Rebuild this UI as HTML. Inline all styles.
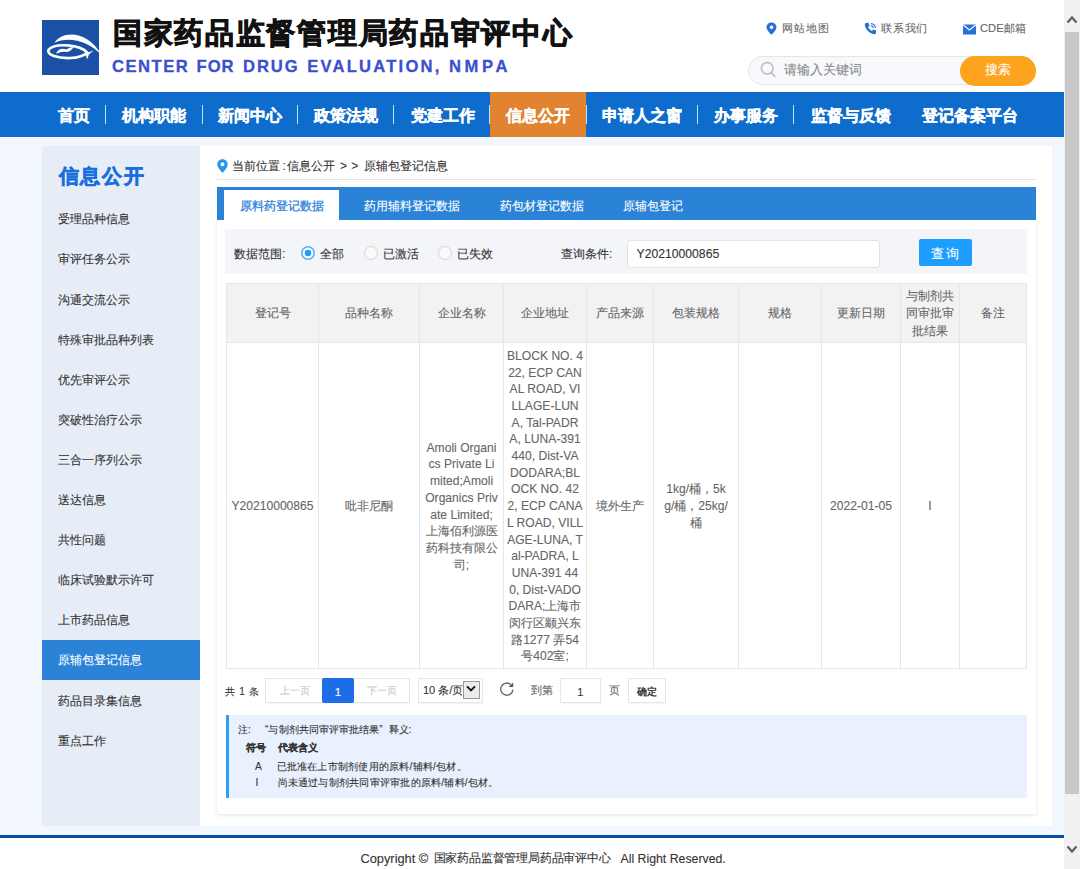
<!DOCTYPE html>
<html><head><meta charset="utf-8">
<style>
*{margin:0;padding:0;box-sizing:border-box}
html,body{width:1080px;height:869px;overflow:hidden;background:#fff;font-family:"Liberation Sans",sans-serif;color:#333;-webkit-text-stroke-width:0.1px}
.a{position:absolute;white-space:nowrap}
#nav{position:absolute;left:0;top:92px;width:1064px;height:45px;background:#0e6dcc}
#nav .t{position:absolute;top:1px;height:45px;line-height:45px;color:#fff;font-size:15.6px;font-weight:bold;-webkit-text-stroke:0.35px #fff;white-space:nowrap}
#nav .s{position:absolute;top:13px;width:1px;height:19px;background:rgba(255,255,255,.78)}
#bg{position:absolute;left:0;top:137px;width:1064px;height:698px;background:#f2f6fd}
#side{position:absolute;left:42px;top:146px;width:158px;height:680px;background:#e6edf6}
#side .i{position:absolute;left:0;width:158px;height:40.1px;line-height:40.1px;padding-left:16px;font-size:12px;color:#333;white-space:nowrap}

#side .act{background:#2b83d8;color:#fff}
#outer{position:absolute;left:200px;top:146px;width:852px;height:680px;background:#fff}
#card{position:absolute;left:217px;top:220px;width:819px;height:594px;background:#fff;box-shadow:0 1px 3px rgba(60,90,150,.18)}
#foot{position:absolute;left:0;top:835px;width:1064px;height:35px;background:#fff;border-top:3px solid #0a4ca6}
#sb{position:absolute;left:1064px;top:0;width:16px;height:869px;background:#f1f1f1}
#thumb{position:absolute;left:1065px;top:32px;width:14px;height:762px;background:#c8c8c8}
.tab{position:absolute;top:190px;height:33px;line-height:33px;font-size:12px;color:#fff;white-space:nowrap}
.rad{position:absolute;width:14px;height:14px;border:1px solid #d3d3d3;border-radius:50%;background:#f9f9f9}
.vl{position:absolute;top:283px;width:1px;height:386px;background:#e6e6e6}
.th{position:absolute;top:284px;height:60px;display:flex;align-items:center;justify-content:center;text-align:center;font-size:12px;color:#666;line-height:17.4px}
.td{position:absolute;top:343px;height:325px;padding-top:2px;display:flex;align-items:center;justify-content:center;text-align:center;font-size:12.1px;color:#666;line-height:16.7px;white-space:nowrap}
.z{font-size:11.7px}
.pb{position:absolute;top:678px;height:24.5px;border:1px solid #e6e6e6;box-shadow:0 0.5px 1px rgba(0,0,0,.04);background:#fff;font-size:11px;line-height:22.5px;text-align:center;white-space:nowrap}
.nt{position:absolute;font-size:10.5px;color:#333;white-space:nowrap}
</style></head><body>
<!-- header -->
<svg class="a" style="left:42px;top:19.6px;overflow:visible" width="64" height="56" viewBox="0 0 64 56">
 <rect width="57" height="55" fill="#1a50a6"/>
 <path d="M12.5 22.8 C19 11.5 45 8 60.5 36.5 C46 19.2 25 16.8 12.5 22.8 Z" fill="#fff"/>
 <path d="M45.5 32.8 C38 24.5 13 22.5 6.5 29.8 C4.5 35 16 38.5 28.5 38 C36 37.6 41.5 35.6 45.5 32.8 Z" fill="none" stroke="#fff" stroke-width="2.7"/>
 <path d="M43.5 33.5 L51.5 30.5 L47 34.5 L45 39.5 Z" fill="#fff"/>
 <path d="M14.5 32.4 C17 28.4 21 28.2 24.5 29.4 C26.5 28 28.5 27 31.5 26.9 C30.5 29.6 27.8 31.4 25 32.1 C21.5 31.2 18 31.6 14.5 33.8 Z" fill="#fff"/>
</svg>
<div class="a" id="title" style="left:113px;top:13.5px;font-size:29px;line-height:38px;font-weight:bold;color:#111;-webkit-text-stroke:0.9px #111;letter-spacing:1.7px">国家药品监督管理局药品审评中心</div>
<div class="a" style="left:112px;top:56px;font-size:16.6px;line-height:22px;font-weight:bold;color:#3b50cf;-webkit-text-stroke:0.3px #3b50cf;letter-spacing:1.5px">CENTER</div>
<div class="a" style="left:196.5px;top:56px;font-size:16.6px;line-height:22px;font-weight:bold;color:#3b50cf;-webkit-text-stroke:0.3px #3b50cf;letter-spacing:1.0px">FOR</div>
<div class="a" style="left:243px;top:56px;font-size:16.6px;line-height:22px;font-weight:bold;color:#3b50cf;-webkit-text-stroke:0.3px #3b50cf;letter-spacing:1.9px">DRUG</div>
<div class="a" style="left:307.3px;top:56px;font-size:16.6px;line-height:22px;font-weight:bold;color:#3b50cf;-webkit-text-stroke:0.3px #3b50cf;letter-spacing:2.2px">EVALUATION,</div>
<div class="a" style="left:449px;top:56px;font-size:16.6px;line-height:22px;font-weight:bold;color:#3b50cf;-webkit-text-stroke:0.3px #3b50cf;letter-spacing:3.6px">NMPA</div>

<svg class="a" style="left:766px;top:22px" width="11" height="13" viewBox="0 0 11 13"><path d="M5.5 0.5 C2.5 0.5 0.5 2.7 0.5 5.3 C0.5 8.3 5.5 12.8 5.5 12.8 C5.5 12.8 10.5 8.3 10.5 5.3 C10.5 2.7 8.5 0.5 5.5 0.5 Z M5.5 3.5 A1.8 1.8 0 1 1 5.5 7.1 A1.8 1.8 0 1 1 5.5 3.5 Z" fill="#2770d6" fill-rule="evenodd"/></svg>
<div class="a" style="left:782px;top:21px;font-size:11.2px;line-height:15px;color:#666;letter-spacing:0.9px">网站地图</div>
<svg class="a" style="left:864px;top:22px" width="13" height="13" viewBox="0 0 13 13"><path d="M2 1 L4.5 0.8 L5.6 3.8 L4 5 C4.8 6.8 6.2 8.2 8 9 L9.2 7.4 L12.2 8.5 L12 11 C11.8 12 11 12.3 10 12.2 C5.5 11.5 1.5 7.5 0.8 3 C0.7 2 1 1.2 2 1 Z" fill="#2770d6"/><path d="M7 1.5 C9.3 1.8 11.2 3.7 11.5 6" stroke="#2770d6" stroke-width="1.1" fill="none"/><path d="M7 3.6 C8.2 3.8 9.2 4.8 9.4 6" stroke="#2770d6" stroke-width="1.1" fill="none"/></svg>
<div class="a" style="left:881px;top:21px;font-size:11.2px;line-height:15px;color:#666;letter-spacing:0.8px">联系我们</div>
<svg class="a" style="left:963px;top:24px" width="13" height="11" viewBox="0 0 13 11"><path d="M0 0.5 H13 V10.5 H0 Z" fill="#2770d6"/><path d="M0.3 1 L6.5 6 L12.7 1" stroke="#fff" stroke-width="1.2" fill="none"/></svg>
<div class="a" style="left:980px;top:21px;font-size:11.2px;line-height:15px;color:#666">CDE邮箱</div>

<div class="a" style="left:748px;top:56px;width:288px;height:29px;border:1px solid #e4e6ea;border-radius:15px;background:#f7f9fc"></div>
<svg class="a" style="left:759px;top:60px" width="20" height="20" viewBox="0 0 20 20"><circle cx="8.2" cy="8.3" r="5.8" stroke="#c4c4c4" stroke-width="1.8" fill="none"/><path d="M12.6 12.8 L16.2 16.8" stroke="#c4c4c4" stroke-width="1.9"/></svg>
<div class="a" style="left:784px;top:62px;font-size:12.5px;line-height:17px;color:#888">请输入关键词</div>
<div class="a" style="left:960px;top:56px;width:76px;height:29.5px;border-radius:15px;background:#fda31d;color:#fff;font-size:12.5px;line-height:29.5px;text-align:center">搜索</div>

<!-- nav -->
<div id="nav">
 <div class="t" style="left:58px">首页</div>
 <div class="s" style="left:105px"></div>
 <div class="t" style="left:122px">机构职能</div>
 <div class="s" style="left:202px"></div>
 <div class="t" style="left:218px">新闻中心</div>
 <div class="s" style="left:297px"></div>
 <div class="t" style="left:314px">政策法规</div>
 <div class="s" style="left:393px"></div>
 <div class="t" style="left:410.5px">党建工作</div>
 <div class="s" style="left:489px"></div>
 <div style="position:absolute;left:490px;top:0;width:96px;height:45px;background:#e1832f"></div>
 <div class="t" style="left:506px">信息公开</div>
 <div class="s" style="left:586px"></div>
 <div class="t" style="left:602px">申请人之窗</div>
 <div class="s" style="left:697px"></div>
 <div class="t" style="left:714px">办事服务</div>
 <div class="s" style="left:793px"></div>
 <div class="t" style="left:810.5px">监督与反馈</div>
 <div class="t" style="left:922px">登记备案平台</div>
</div>
<div id="bg"></div>

<!-- sidebar -->
<div id="side">
 <div class="a" style="left:16.5px;top:17.3px;font-size:20px;line-height:26px;font-weight:bold;color:#1a6fdd;-webkit-text-stroke:0.6px #1a6fdd;letter-spacing:1.7px">信息公开</div>
 <div class="i" style="top:53.3px">受理品种信息</div>
 <div class="i" style="top:93.4px">审评任务公示</div>
 <div class="i" style="top:133.5px">沟通交流公示</div>
 <div class="i" style="top:173.6px">特殊审批品种列表</div>
 <div class="i" style="top:213.7px">优先审评公示</div>
 <div class="i" style="top:253.8px">突破性治疗公示</div>
 <div class="i" style="top:293.9px">三合一序列公示</div>
 <div class="i" style="top:334px">送达信息</div>
 <div class="i" style="top:374.1px">共性问题</div>
 <div class="i" style="top:414.2px">临床试验默示许可</div>
 <div class="i" style="top:454.3px">上市药品信息</div>
 <div class="i act" style="top:494.4px">原辅包登记信息</div>
 <div class="i" style="top:534.5px">药品目录集信息</div>
 <div class="i" style="top:574.6px">重点工作</div>
</div>

<div id="outer"></div>
<div id="card"></div>

<!-- breadcrumb -->
<svg class="a" style="left:217px;top:159px" width="11" height="14" viewBox="0 0 11 14"><path d="M5.5 0.3 C2.4 0.3 0.3 2.6 0.3 5.4 C0.3 8.6 5.5 13.8 5.5 13.8 C5.5 13.8 10.7 8.6 10.7 5.4 C10.7 2.6 8.6 0.3 5.5 0.3 Z M5.5 3.3 A2 2 0 1 1 5.5 7.3 A2 2 0 1 1 5.5 3.3 Z" fill="#2196f3" fill-rule="evenodd"/></svg>
<div class="a" style="left:232px;top:157.5px;font-size:12px;line-height:17px;color:#333">当前位置</div>
<div class="a" style="left:282.5px;top:157.5px;font-size:12px;line-height:17px;color:#333">:</div>
<div class="a" style="left:287px;top:157.5px;font-size:12px;line-height:17px;color:#333">信息公开</div>
<div class="a" style="left:340px;top:157.5px;font-size:12px;line-height:17px;color:#333;word-spacing:1px">&gt; &gt;</div>
<div class="a" style="left:364px;top:157.5px;font-size:12px;line-height:17px;color:#333">原辅包登记信息</div>
<div class="a" style="left:217px;top:179px;width:819px;height:1px;background:#e3e3e3"></div>

<!-- tabs -->
<div class="a" style="left:217px;top:187px;width:819px;height:33px;background:#2b83d7"></div>
<div class="a" style="left:223.5px;top:190px;width:115.5px;height:30px;background:#fff"></div>
<div class="tab" style="left:240px;color:#2e83dc;-webkit-text-stroke:0.3px #2e83dc">原料药登记数据</div>
<div class="tab" style="left:364px">药用辅料登记数据</div>
<div class="tab" style="left:499.5px">药包材登记数据</div>
<div class="tab" style="left:623px">原辅包登记</div>

<!-- filter -->
<div class="a" style="left:225px;top:229px;width:802px;height:45px;background:#f3f5f9"></div>
<div class="a" style="left:234px;top:246px;font-size:12px;line-height:16px;color:#333">数据范围:</div>
<svg class="a" style="left:301px;top:245.5px" width="14" height="14" viewBox="0 0 14 14"><circle cx="7" cy="7" r="6.2" fill="#fff" stroke="#5ab0fb" stroke-width="1.6"/><circle cx="7" cy="7" r="3.3" fill="#1e9bff"/></svg>
<div class="a" style="left:320px;top:246px;font-size:12px;line-height:16px;color:#333">全部</div>
<div class="rad" style="left:364px;top:245.5px"></div>
<div class="a" style="left:383px;top:246px;font-size:12px;line-height:16px;color:#333">已激活</div>
<div class="rad" style="left:438px;top:245.5px"></div>
<div class="a" style="left:457px;top:246px;font-size:12px;line-height:16px;color:#333">已失效</div>
<div class="a" style="left:561px;top:246px;font-size:12px;line-height:16px;color:#333">查询条件:</div>
<div class="a" style="left:627px;top:239.5px;width:252.5px;height:28px;border:1px solid #e3e3e3;border-radius:3px;background:#fff"></div>
<div class="a" style="left:636.5px;top:246px;font-size:12.2px;line-height:17px;color:#333">Y20210000865</div>
<div class="a" style="left:918.5px;top:239px;width:53px;height:27px;border-radius:2px;background:#1e9fff;color:#fff;font-size:13px;line-height:27px;padding-top:1px;text-align:center;letter-spacing:2px;padding-left:2px">查询</div>

<!-- table -->
<div class="a" style="left:226px;top:283px;width:801px;height:60px;background:#f2f2f2"></div>
<div class="a" style="left:226px;top:283px;width:801px;height:1px;background:#e6e6e6"></div>
<div class="a" style="left:226px;top:342px;width:801px;height:1px;background:#e6e6e6"></div>
<div class="a" style="left:226px;top:668px;width:801px;height:1px;background:#e6e6e6"></div>
<div class="vl" style="left:226px"></div>
<div class="vl" style="left:318px"></div>
<div class="vl" style="left:419px"></div>
<div class="vl" style="left:503px"></div>
<div class="vl" style="left:586px"></div>
<div class="vl" style="left:653px"></div>
<div class="vl" style="left:738px"></div>
<div class="vl" style="left:821px"></div>
<div class="vl" style="left:900px"></div>
<div class="vl" style="left:959px"></div>
<div class="vl" style="left:1026px"></div>
<div class="th" style="left:226px;width:93px"><div>登记号</div></div>
<div class="th" style="left:318px;width:102px"><div>品种名称</div></div>
<div class="th" style="left:419px;width:85px"><div>企业名称</div></div>
<div class="th" style="left:503px;width:84px"><div>企业地址</div></div>
<div class="th" style="left:586px;width:68px"><div>产品来源</div></div>
<div class="th" style="left:653px;width:86px"><div>包装规格</div></div>
<div class="th" style="left:738px;width:84px"><div>规格</div></div>
<div class="th" style="left:821px;width:80px"><div>更新日期</div></div>
<div class="th" style="left:900px;width:60px"><div>与制剂共<br>同审批审<br>批结果</div></div>
<div class="th" style="left:959px;width:68px"><div>备注</div></div>
<div class="td" style="left:226px;width:93px"><div>Y20210000865</div></div>
<div class="td" style="left:318px;width:102px"><div><span class="z">吡非尼酮</span></div></div>
<div class="td" style="left:419px;width:85px"><div>Amoli Organi<br>cs Private Li<br>mited;Amoli<br>Organics Priv<br>ate Limited;<br><span class="z">上海佰利源医</span><br><span class="z">药科技有限公</span><br><span class="z">司</span>;</div></div>
<div class="td" style="left:503px;width:84px"><div>BLOCK NO. 4<br>22, ECP CAN<br>AL ROAD, VI<br>LLAGE-LUN<br>A, Tal-PADR<br>A, LUNA-391<br>440, Dist-VA<br>DODARA;BL<br>OCK NO. 42<br>2, ECP CANA<br>L ROAD, VILL<br>AGE-LUNA, T<br>al-PADRA, L<br>UNA-391 44<br>0, Dist-VADO<br>DARA;<span class="z">上海市</span><br><span class="z">闵行区颛兴东</span><br><span class="z">路</span>1277 <span class="z">弄</span>54<br><span class="z">号</span>402<span class="z">室</span>;</div></div>
<div class="td" style="left:586px;width:68px"><div><span class="z">境外生产</span></div></div>
<div class="td" style="left:653px;width:86px"><div>1kg/<span class="z">桶，</span>5k<br>g/<span class="z">桶，</span>25kg/<br><span class="z">桶</span></div></div>
<div class="td" style="left:821px;width:80px"><div>2022-01-05</div></div>
<div class="td" style="left:900px;width:60px"><div>I</div></div>

<!-- pagination -->
<div class="a" style="left:225px;top:683.5px;font-size:10px;line-height:16px;color:#333;word-spacing:1.5px">共 1 条</div>
<div class="pb" style="left:265px;width:145px"></div>
<div class="a" style="left:265px;top:678px;width:57px;height:24.5px;line-height:24.5px;font-size:10px;color:#c6c6c6;text-align:center;padding-left:2px;padding-top:1px">上一页</div>
<div class="a" style="left:322.3px;top:678px;width:31.5px;height:24.5px;line-height:24.5px;font-size:11.5px;color:#fff;text-align:center;background:#1d6ee6;border-radius:2px;padding-top:1.5px">1</div>
<div class="a" style="left:354px;top:678px;width:56px;height:24.5px;line-height:24.5px;font-size:10px;color:#c6c6c6;text-align:center;padding-top:1px">下一页</div>
<div class="pb" style="left:418px;width:64.5px;text-align:left;padding-left:4px">10 条/页</div>
<div class="a" style="left:463.2px;top:680.9px;width:16.8px;height:17.9px;background:#ececec;border:1px solid #999"><svg style="position:absolute;left:2px;top:3.5px" width="10" height="8" viewBox="0 0 10 8"><path d="M1 1.3 L5 5.3 L9 1.3" stroke="#111" stroke-width="1.9" fill="none"/></svg></div>
<svg class="a" style="left:499px;top:681px" width="16" height="16" viewBox="0 0 16 16"><path d="M13.9 8.6 A6.1 6.1 0 1 1 11.9 3.6" stroke="#666" stroke-width="1.35" fill="none"/><path d="M14.2 1.6 L14.2 6.1 L9.6 6.1 Z" fill="#555"/></svg>
<div class="a" style="left:531px;top:682px;font-size:10.5px;line-height:16px;color:#666">到第</div>
<div class="pb" style="left:559.5px;width:41.5px;font-size:11px;color:#333;padding-top:2px">1</div>
<div class="a" style="left:609px;top:682px;font-size:11px;line-height:16px;color:#666">页</div>
<div class="pb" style="left:628px;width:37.5px;font-size:10px;color:#222;padding-top:2px;-webkit-text-stroke:0.3px #222">确定</div>

<!-- note -->
<div class="a" style="left:225.5px;top:715px;width:801.5px;height:82.5px;background:#e8f1fd;border-left:3px solid #2b9ef5"></div>
<div class="nt" style="left:238px;top:721.5px;line-height:16px;font-size:10.2px">注:</div>
<div class="nt" style="left:265px;top:721.5px;line-height:16px;font-size:10.2px;letter-spacing:0.08px">“与制剂共同审评审批结果”</div>
<div class="nt" style="left:388.5px;top:721.5px;line-height:16px;font-size:10.2px">释义:</div>
<div class="nt" style="left:246px;top:740px;line-height:16px;font-size:10.2px;font-weight:bold;-webkit-text-stroke:0.15px #333">符号</div>
<div class="nt" style="left:277.5px;top:740px;line-height:16px;font-size:10.2px;font-weight:bold;-webkit-text-stroke:0.15px #333">代表含义</div>
<div class="nt" style="left:255px;top:758.5px;line-height:16px;font-size:10.2px">A</div>
<div class="nt" style="left:276.5px;top:758.5px;line-height:16px;font-size:10px;letter-spacing:0.24px">已批准在上市制剂使用的原料/辅料/包材。</div>
<div class="nt" style="left:255.5px;top:774.5px;line-height:16px;font-size:10.2px">I</div>
<div class="nt" style="left:277.5px;top:774.5px;line-height:16px;font-size:10px;letter-spacing:0.24px">尚未通过与制剂共同审评审批的原料/辅料/包材。</div>

<div id="foot"></div>
<div class="a" style="left:360.5px;top:850.3px;font-size:12.8px;line-height:17px;color:#333">Copyright ©</div>
<div class="a" style="left:433.5px;top:850.3px;font-size:12px;line-height:17px;color:#333;letter-spacing:-0.2px">国家药品监督管理局药品审评中心</div>
<div class="a" style="left:620.5px;top:850.6px;font-size:12.3px;line-height:17px;color:#333">All Right Reserved.</div>
<div id="sb"></div>
<div id="thumb"></div>
<svg class="a" style="left:1064px;top:12px" width="16" height="16" viewBox="0 0 16 16"><path d="M3.5 10.5 L8 5.5 L12.5 10.5" stroke="#5f5f5f" stroke-width="2.2" fill="none"/></svg>
<svg class="a" style="left:1064px;top:841px" width="16" height="16" viewBox="0 0 16 16"><path d="M3.5 5.5 L8 10.5 L12.5 5.5" stroke="#5f5f5f" stroke-width="2.2" fill="none"/></svg>
</body></html>
